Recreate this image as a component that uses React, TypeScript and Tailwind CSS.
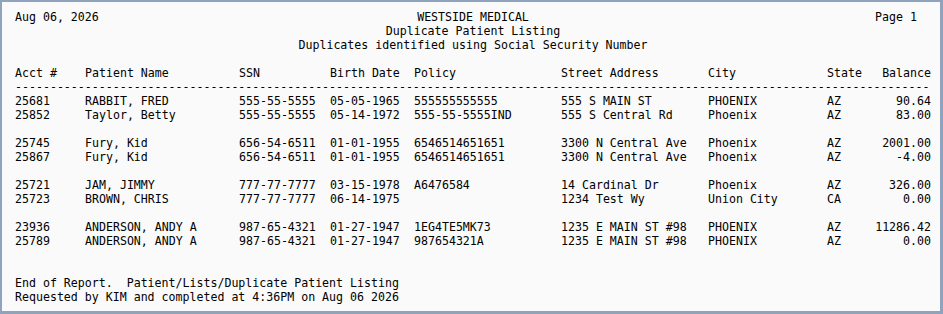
const cols = ['w-[70px]', 'w-[154px]', 'w-[91px]', 'w-[84px]', 'w-[147px]', 'w-[147px]', 'w-[119px]']

type Row = [string, string, string, string, string, string, string, string, string]

const groups: Row[][] = [
  [
    ['25681', 'RABBIT, FRED', '555-55-5555', '05-05-1965', '555555555555', '555 S MAIN ST', 'PHOENIX', 'AZ', '90.64'],
    ['25852', 'Taylor, Betty', '555-55-5555', '05-14-1972', '555-55-5555IND', '555 S Central Rd', 'Phoenix', 'AZ', '83.00'],
  ],
  [
    ['25745', 'Fury, Kid', '656-54-6511', '01-01-1955', '6546514651651', '3300 N Central Ave', 'Phoenix', 'AZ', '2001.00'],
    ['25867', 'Fury, Kid', '656-54-6511', '01-01-1955', '6546514651651', '3300 N Central Ave', 'Phoenix', 'AZ', '-4.00'],
  ],
  [
    ['25721', 'JAM, JIMMY', '777-77-7777', '03-15-1978', 'A6476584', '14 Cardinal Dr', 'Phoenix', 'AZ', '326.00'],
    ['25723', 'BROWN, CHRIS', '777-77-7777', '06-14-1975', '', '1234 Test Wy', 'Union City', 'CA', '0.00'],
  ],
  [
    ['23936', 'ANDERSON, ANDY A', '987-65-4321', '01-27-1947', '1EG4TE5MK73', '1235 E MAIN ST #98', 'PHOENIX', 'AZ', '11286.42'],
    ['25789', 'ANDERSON, ANDY A', '987-65-4321', '01-27-1947', '987654321A', '1235 E MAIN ST #98', 'PHOENIX', 'AZ', '0.00'],
  ],
]

function Line({ cells }: { cells: string[] }) {
  return (
    <div className="flex h-[14px]">
      {cols.map((c, i) => (
        <div key={i} className={`${c} shrink-0`}>{cells[i]}</div>
      ))}
      <div className="flex-1">{cells[7]}</div>
      <div className="text-right">{cells[8]}</div>
    </div>
  )
}

function App() {
  return (
    <div className="w-[943px] h-[314px] bg-[#8fa3bf] pl-[2px] pt-[2px] pr-[3px] pb-[3px]">
      <div
        className="h-full bg-[#fafafa] text-black pl-[13px] pr-[9px] pt-[8px] text-[11.6px] leading-[14px] whitespace-pre"
        style={{ fontFamily: '"DejaVu Sans Mono", "Liberation Mono", monospace' }}
      >
        {/* Report heading */}
        <div className="relative h-[14px]">
          <div>Aug 06, 2026</div>
          <div className="absolute right-[14px] top-0">Page 1</div>
          <div className="absolute inset-x-0 top-0 text-center">WESTSIDE MEDICAL</div>
        </div>
        <div className="h-[14px] text-center">Duplicate Patient Listing</div>
        <div className="h-[14px] text-center">Duplicates identified using Social Security Number</div>
        <div className="h-[14px]" />

        <Line cells={['Acct #', 'Patient Name', 'SSN', 'Birth Date', 'Policy', 'Street Address', 'City', 'State', 'Balance']} />
        <div className="h-[14px] overflow-hidden">{'-'.repeat(131)}</div>

        {groups.map((g, gi) => (
          <div key={gi}>
            {gi > 0 && <div className="h-[14px]" />}
            {g.map((r, ri) => (
              <Line key={ri} cells={r} />
            ))}
          </div>
        ))}

        <div className="h-[28px]" />
        <div className="h-[14px]">End of Report.  Patient/Lists/Duplicate Patient Listing</div>
        <div className="h-[14px]">Requested by KIM and completed at 4:36PM on Aug 06 2026</div>
      </div>
    </div>
  )
}

export default App
